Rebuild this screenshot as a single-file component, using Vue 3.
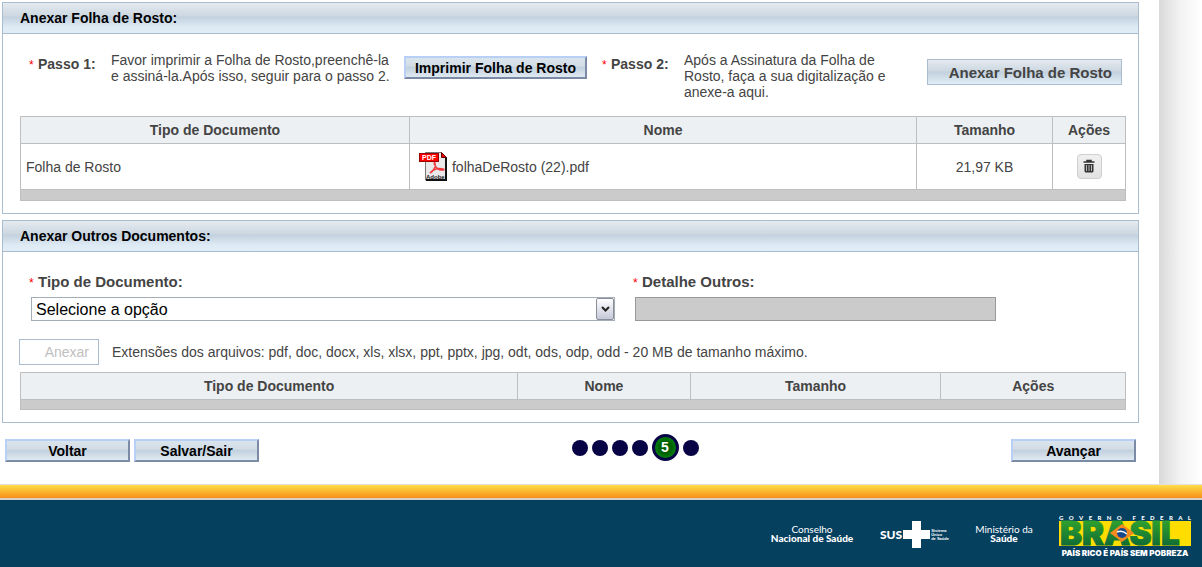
<script setup>
import { ref } from 'vue'

const tipo = ref('Selecione a opção')
const steps = [1, 2, 3, 4, 5, 6]
const current = 5
const government = 'GOVERNO FEDERAL'.split('')
</script>

<template>
  <div class="page">
    <div class="sheet">
      <main class="content">
        <section class="panel">
          <h2 class="panel-title">Anexar Folha de Rosto:</h2>
          <div class="panel-body">
            <div class="steps">
              <strong class="step-label"><span class="req">*</span>Passo 1:</strong>
              <p class="step-text first">Favor imprimir a Folha de Rosto,preenchê-la e assiná-la.Após isso, seguir para o passo 2.</p>
              <button class="btn print" type="button">Imprimir Folha de Rosto</button>
              <strong class="step-label"><span class="req">*</span>Passo 2:</strong>
              <p class="step-text second">Após a Assinatura da Folha de Rosto, faça a sua digitalização e anexe-a aqui.</p>
              <button class="upload" type="button">Anexar Folha de Rosto</button>
            </div>
            <table class="grid files">
              <colgroup><col class="c-type"><col class="c-name"><col class="c-size"><col class="c-act"></colgroup>
              <thead>
                <tr><th>Tipo de Documento</th><th>Nome</th><th>Tamanho</th><th>Ações</th></tr>
              </thead>
              <tbody>
                <tr>
                  <td>Folha de Rosto</td>
                  <td>
                    <div class="file">
                      <svg class="pdf" viewBox="0 0 28 29" width="28" height="29" aria-hidden="true">
                        <path d="M6.500 .5H22.500L27.500 5.500V28H6.500Z" fill="#e9e9ea" stroke="#777" />
                        <path d="M27 5V28H7" fill="none" stroke="#111" stroke-width="2" />
                        <path d="M22.500 .5V5.500H27.500Z" fill="#e00" stroke="#600" />
                        <path d="M11 21C15 19 17 14 16 11C15 9 14 13 19 17C23 19 27 18 24 17C20 16 15 17 11 21Z" fill="none" stroke="#f0383c" stroke-width="1.400" />
                        <rect x=".5" y="1.500" width="19" height="8" fill="#f00" stroke="#900" />
                        <text x="3" y="8" font-size="7" font-weight="700" fill="#fff">PDF</text>
                        <text x="7" y="27" font-size="6" font-weight="700" fill="#222">Adobe</text>
                      </svg>
                      <span>folhaDeRosto (22).pdf</span>
                    </div>
                  </td>
                  <td class="center">21,97 KB</td>
                  <td class="center">
                    <button class="trash" type="button" aria-label="Excluir">
                      <svg viewBox="0 0 12 13" width="12" height="13" aria-hidden="true">
                        <path d="M4 1.500V.5H8V1.500M.5 2H11.500" fill="none" stroke="#333" stroke-width="1.500" />
                        <path d="M1.500 4H10.500V11Q10.500 12.500 9 12.500H3Q1.500 12.500 1.500 11Z" fill="#333" />
                        <path d="M3.500 5V11M6 5V11M8.500 5V11" stroke="#bbb" />
                      </svg>
                    </button>
                  </td>
                </tr>
              </tbody>
              <tfoot><tr><td colspan="4"></td></tr></tfoot>
            </table>
          </div>
        </section>

        <section class="panel">
          <h2 class="panel-title">Anexar Outros Documentos:</h2>
          <div class="panel-body">
            <div class="fields">
              <div class="field type">
                <label for="tipo"><span class="req">*</span>Tipo de Documento:</label>
                <div class="select">
                  <select id="tipo" v-model="tipo"><option>Selecione a opção</option></select>
                  <span class="arrow">
                    <svg viewBox="0 0 9 6" width="9" height="6" aria-hidden="true"><path d="M1 1L4.500 4.500L8 1" fill="none" stroke="#222" stroke-width="2" /></svg>
                  </span>
                </div>
              </div>
              <div class="field detail">
                <label for="detalhe"><span class="req">*</span>Detalhe Outros:</label>
                <input id="detalhe" type="text" disabled>
              </div>
            </div>
            <div class="attach">
              <button class="upload off" type="button" disabled>Anexar</button>
              <span>Extensões dos arquivos: pdf, doc, docx, xls, xlsx, ppt, pptx, jpg, odt, ods, odp, odd - 20 MB de tamanho máximo.</span>
            </div>
            <table class="grid others">
              <colgroup><col class="c-type"><col class="c-name"><col class="c-size"><col class="c-act"></colgroup>
              <thead>
                <tr><th>Tipo de Documento</th><th>Nome</th><th>Tamanho</th><th>Ações</th></tr>
              </thead>
              <tfoot><tr><td colspan="4"></td></tr></tfoot>
            </table>
          </div>
        </section>

        <nav class="actions">
          <div class="group">
            <button class="btn nav" type="button">Voltar</button>
            <button class="btn nav" type="button">Salvar/Sair</button>
          </div>
          <div class="dots">
            <span v-for="s in steps" :key="s" :class="['dot', { now: s === current }]">{{ s === current ? s : '' }}</span>
          </div>
          <button class="btn nav" type="button">Avançar</button>
        </nav>
      </main>
      <div class="shade"></div>
    </div>

    <div class="stripe"></div>
    <footer class="footer">
      <div class="org council">Conselho<b>Nacional de Saúde</b></div>
      <div class="sus">
        <b>SUS</b>
        <svg viewBox="0 0 27 27" width="27" height="27" aria-hidden="true"><path d="M9 0H18V9H27V18H18V27H9V18H0V9H9Z" fill="#fff" /></svg>
        <span class="sus-name"><span>Sistema</span><span>Único</span><span>de Saúde</span></span>
      </div>
      <div class="org ministry">Ministério da<b>Saúde</b></div>
      <div class="brasil">
        <div class="gov"><span v-for="(c, i) in government" :key="i">{{ c }}</span></div>
        <svg viewBox="0 0 132 25" width="132" height="25" role="img" aria-label="Brasil">
          <defs>
            <linearGradient id="leaf" x1="0" y1="0" x2="0" y2="1">
              <stop offset="0.200" stop-color="#2fa02f" /><stop offset="1" stop-color="#075c37" />
            </linearGradient>
          </defs>
          <rect width="132" height="25" fill="#fd0" />
          <text class="word" x="1" y="24" fill="url(#leaf)" stroke="url(#leaf)">BRASIL</text>
          <path d="M51 12L63 3L75 12L63 21Z" fill="#f58a1f" />
          <circle cx="63" cy="12" r="5" fill="#174a8c" />
          <path d="M58 11Q63 9 68 13" fill="none" stroke="#fff" stroke-width="1.500" />
        </svg>
        <b class="motto">PAÍS RICO É PAÍS SEM POBREZA</b>
      </div>
    </footer>
  </div>
</template>

<style>
body { margin: 0; background: #fff; }
</style>

<style scoped>
.page { font-family: "Liberation Sans", Arial, sans-serif; font-size: 14px; line-height: 16px; color: #444; min-height: 100vh; display: flex; flex-direction: column; }
.page * { box-sizing: border-box; }
svg { overflow: visible; }
button, input, select { font-family: inherit; margin: 0; border-radius: 0; }
.sheet { display: flex; }
.content { flex: 1; min-width: 0; padding: 2px 20px 22px 2px; }
.shade { width: 43px; background: linear-gradient(90deg, #d9d9d9, #f3f3f3 50%, #fff); }

.panel { border: 1px solid #a9bdce; margin-bottom: 6px; }
.panel-title { margin: 0; height: 31px; padding: 0 17px; font-size: 14px; line-height: 30px; color: #000; border-bottom: 1px solid #a9bdce; background: linear-gradient(#e5eaef 0, #ccd7e1 44%, #c2d1de 46%, #deeaf4 80%, #e1edf6); }
.panel-body { padding: 18px 12px 12px 17px; }
.steps { display: flex; align-items: flex-start; height: 64px; padding: 0 4px 0 9px; }
.step-label { width: 82px; padding-top: 4px; white-space: nowrap; }
.req { display: inline-block; width: 9px; color: #f00; font-size: 12px; font-weight: 400; }
.step-text { margin: 0; }
.first { width: 286px; }
.second { width: 230px; }
.btn { height: 23px; padding: 0; border: 2px solid; border-color: #b8d0f5 #7b8ba6 #7b8ba6 #b8d0f5; background: linear-gradient(#dae4ec, #d2dde6 40%, #c2d1de 50%, #dfe9f1); font-size: 14px; font-weight: 700; color: #000; }
.print { width: 183px; margin: 4px 15px 0 7px; white-space: nowrap; }
.upload { height: 26px; padding: 0 9px 0 0; margin: 7px 0 0 auto; width: 195px; border: 1px solid #a9bdce; background: linear-gradient(#e5eaef, #ccd7e1 46%, #c2d1de 50%, #e1edf6); font-size: 15px; font-weight: 700; color: #444; text-align: right; }

.grid { width: 100%; table-layout: fixed; border-collapse: collapse; }
.grid th, .grid td { border: 1px solid #bebebe; padding: 0 5px; }
.grid th { height: 27px; background: #ecf0f3; font-size: 14px; }
.grid tbody td { height: 46px; }
.grid tfoot td { height: 11px; background: #cbcbcb; padding: 0; }
.others tfoot td { height: 10px; }
.center { text-align: center; }
.files .c-size { width: 136px; }
.files .c-act { width: 73px; }
.files .c-type { width: 35.200%; }
.others .c-type { width: 45%; }
.others .c-name { width: 15.600%; }
.others .c-size { width: 22.700%; }
.file { display: flex; align-items: center; gap: 5px; padding-left: 4px; }
.trash { width: 25px; height: 25px; padding: 0; display: inline-flex; align-items: center; justify-content: center; vertical-align: middle; border: 1px solid #cfcfcf; border-radius: 4px; background: linear-gradient(#f0f0f0, #e2e2e2); }

.fields { display: flex; gap: 20px; padding: 4px 0 0 11px; }
.field { display: flex; flex-direction: column; gap: 6px; }
.field label { font-size: 15px; font-weight: 700; margin-left: -2px; }
.type { width: 584px; }
.detail { width: 361px; }
.select { display: grid; height: 24px; border: 1px solid #a5acb5; }
.select select { grid-area: 1 / 1; appearance: none; border: 0; background: #fff; padding: 0 24px 0 4px; font-size: 16px; color: #000; height: 22px; }
.arrow { grid-area: 1 / 1; justify-self: end; width: 18px; height: 22px; border: 1px solid #8a909b; border-radius: 2px; background: linear-gradient(#fff, #c5c8d8); display: flex; align-items: center; justify-content: center; pointer-events: none; }
.field input { height: 24px; border: 1px solid #999; background: #cbcbcb; }
.attach { display: flex; align-items: center; gap: 13px; margin: 18px 0 7px -1px; }
.off { width: 80px; margin: 0; background: #fff; color: #c0c0c0; font-size: 14px; font-weight: 400; }

.actions { display: flex; justify-content: space-between; align-items: flex-start; padding: 10px 3px 0; }
.group { display: flex; gap: 4px; }
.nav { width: 125px; }
.dots { display: flex; align-items: center; gap: 4px; height: 27px; margin-top: -5px; }
.dot { width: 16px; height: 16px; border-radius: 50%; background: #080344; }
.now { width: 27px; height: 27px; border: 3px solid #080344; background: radial-gradient(#006000 40%, #007a0c 65%, #4c9c4c); color: #fff; font-weight: 700; line-height: 21px; text-align: center; }

.stripe { height: 16px; border-top: 1px solid #e6dfd8; border-bottom: 2px solid #d9cfc4; background: linear-gradient(#ffdf4a, #fbb52e 50%, #f78f1e); }
.footer { flex: 1; min-height: 67px; background: #05405f; color: #fff; display: flex; justify-content: flex-end; align-items: flex-start; padding: 0 11px 0 0; }
.org { display: flex; flex-direction: column; align-items: center; font-family: Lato, sans-serif; font-size: 10px; line-height: 9px; white-space: nowrap; padding-top: 25px; }
.org b { font-weight: 900; }
.council { width: 86px; }
.ministry { width: 60px; }
.sus { display: flex; align-items: center; gap: 1px; margin: 21px 25px 0; width: 69px; }
.sus b { font: 900 12px Lato, sans-serif; }
.sus-name { display: flex; flex-direction: column; font-size: 4px; line-height: 4px; font-weight: 700; }
.brasil { width: 132px; margin: 14px 0 0 25px; display: flex; flex-direction: column; }
.gov { display: flex; justify-content: space-between; font: 900 6px/7px Lato, sans-serif; }
.word { font: 900 33px Inter, sans-serif; stroke-width: 1px; }
.motto { font: 900 8px/14px Inter, sans-serif; white-space: nowrap; text-align: center; }
</style>
